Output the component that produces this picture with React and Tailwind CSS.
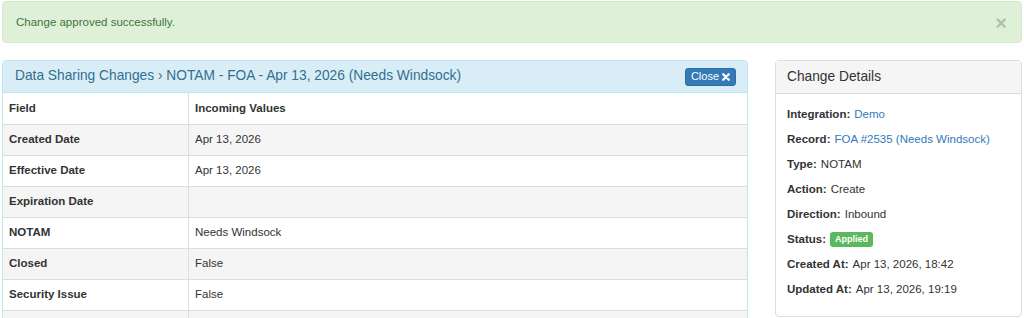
import React from "react";

const rows = [
  ["Created Date", "Apr 13, 2026"],
  ["Effective Date", "Apr 13, 2026"],
  ["Expiration Date", ""],
  ["NOTAM", "Needs Windsock"],
  ["Closed", "False"],
  ["Security Issue", "False"],
  ["", ""],
];

function CloseIcon() {
  return (
    <svg width="8" height="8" viewBox="0 0 10 10" className="ml-[3px]">
      <path d="M1.5 1.5 L8.5 8.5 M8.5 1.5 L1.5 8.5" stroke="white" strokeWidth="2.8" strokeLinecap="round" />
    </svg>
  );
}

function Detail({ label, children }) {
  return (
    <div className="h-[25px] flex items-center">
      <span className="font-bold">{label}:</span>
      <span className="ml-1">{children}</span>
    </div>
  );
}

export default function App() {
  return (
    <div className="w-[1024px] h-[318px] overflow-hidden bg-white text-[11.5px] text-[#333] font-['Liberation_Sans',Arial,sans-serif]">
      {/* Alert */}
      <div className="mx-[2px] mt-[1px] h-[42px] rounded border border-[#d6e9c6] bg-[#dff0d8] text-[#3c763d] flex items-center justify-between pl-[13px] pr-[14px] pt-[2px]">
        <span>Change approved successfully.</span>
        <span className="text-[20px] font-bold leading-none text-black opacity-20">×</span>
      </div>

      <div className="flex mt-[17px] px-[2px] gap-[27px]">
        {/* Left panel */}
        <div className="w-[746px] rounded border border-[#bce8f1] overflow-hidden">
          <div className="h-[32px] bg-[#d9edf7] border-b border-[#bce8f1] flex items-center justify-between pl-[12px] pr-[11px] text-[#31708f] text-[13.75px]">
            <span>Data Sharing Changes › NOTAM - FOA - Apr 13, 2026 (Needs Windsock)</span>
            <button className="h-[18px] px-[5px] rounded-[3px] bg-[#337ab7] border border-[#2e6da4] text-white text-[11px] flex items-center">
              Close
              <CloseIcon />
            </button>
          </div>
          <div className="flex h-[31px] bg-white">
            <div className="w-[186px] px-[6px] font-bold border-r border-[#ddd] flex items-center">Field</div>
            <div className="px-[6px] font-bold flex items-center">Incoming Values</div>
          </div>
          {rows.map(([k, v], i) => (
            <div key={i} className={`flex h-[31px] border-t border-[#ddd] ${i % 2 === 0 ? "bg-[#f5f5f5]" : "bg-white"}`}>
              <div className="w-[186px] px-[6px] font-bold border-r border-[#ddd] flex items-center">{k}</div>
              <div className="px-[6px] flex items-center">{v}</div>
            </div>
          ))}
        </div>

        {/* Right panel */}
        <div className="w-[247px] h-[257px] rounded border border-[#ddd]">
          <div className="h-[33px] bg-[#f5f5f5] border-b border-[#ddd] flex items-center px-[11px] text-[13.75px] text-[#333]">
            Change Details
          </div>
          <div className="px-[11px] pt-[8px]">
            <Detail label="Integration">
              <span className="text-[#337ab7]">Demo</span>
            </Detail>
            <Detail label="Record">
              <span className="text-[#337ab7]">FOA #2535 (Needs Windsock)</span>
            </Detail>
            <Detail label="Type">NOTAM</Detail>
            <Detail label="Action">Create</Detail>
            <Detail label="Direction">Inbound</Detail>
            <Detail label="Status">
              <span className="inline-block bg-[#5cb85c] text-white font-bold text-[9px] leading-none px-[5px] py-[3px] rounded-[3px] align-middle">
                Applied
              </span>
            </Detail>
            <Detail label="Created At">Apr 13, 2026, 18:42</Detail>
            <Detail label="Updated At">Apr 13, 2026, 19:19</Detail>
          </div>
        </div>
      </div>
    </div>
  );
}
